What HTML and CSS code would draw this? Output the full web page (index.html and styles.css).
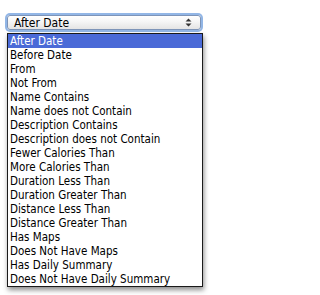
FILE: index.html
```html
<!DOCTYPE html>
<html>
<head>
<meta charset="utf-8">
<link rel="stylesheet" href="styles.css">
</head>
<body>
<div class="page">
  <div class="select">
    <span class="select-value">After Date</span>
    <svg class="arrows" width="7" height="9" viewBox="0 0 7 9"><path d="M3.5 0.5 L6.5 3.5 L0.5 3.5 Z M3.5 8.5 L6.5 5.5 L0.5 5.5 Z" fill="#333"/></svg>
  </div>
  <ul class="list">
    <li class="item selected">After Date</li>
    <li class="item">Before Date</li>
    <li class="item">From</li>
    <li class="item">Not From</li>
    <li class="item">Name Contains</li>
    <li class="item">Name does not Contain</li>
    <li class="item">Description Contains</li>
    <li class="item">Description does not Contain</li>
    <li class="item">Fewer Calories Than</li>
    <li class="item">More Calories Than</li>
    <li class="item">Duration Less Than</li>
    <li class="item">Duration Greater Than</li>
    <li class="item">Distance Less Than</li>
    <li class="item">Distance Greater Than</li>
    <li class="item">Has Maps</li>
    <li class="item">Does Not Have Maps</li>
    <li class="item">Has Daily Summary</li>
    <li class="item">Does Not Have Daily Summary</li>
  </ul>
</div>
</body>
</html>
```
FILE: styles.css
```css
html, body {
  margin: 0;
  padding: 0;
  background: #fff;
}
body {
  font-family: "DejaVu Sans Condensed", "Liberation Sans", Arial, sans-serif;
  color: #000;
}
.page {
  width: 205px;
  height: 295px;
  padding-top: 15px;
  box-sizing: border-box;
}
.select {
  margin-left: 7px;
  width: 194px;
  height: 15px;
  box-sizing: border-box;
  border: 1px solid #7d94b8;
  border-radius: 3px;
  background: linear-gradient(#ffffff, #f5f5f5 45%, #e4e4e4);
  box-shadow: 0 0 0 2px #92b6e6;
  display: flex;
  align-items: center;
  justify-content: space-between;
  padding: 0 8px 0 6px;
}
.select-value {
  font-size: 12px;
  line-height: 14px;
}
.arrows {
  display: block;
}
.list {
  list-style: none;
  margin: 3px 0 0 7px;
  padding: 0;
  width: 194px;
  border: 1px solid #1a1a1a;
  box-shadow: 1px 3px 5px rgba(0, 0, 0, 0.45);
  background: #fff;
}
.item {
  height: 14px;
  line-height: 14px;
  font-size: 11.5px;
  padding-left: 2px;
  white-space: nowrap;
}
.item.selected {
  background: #4a6ad7;
  color: #fff;
}
```
